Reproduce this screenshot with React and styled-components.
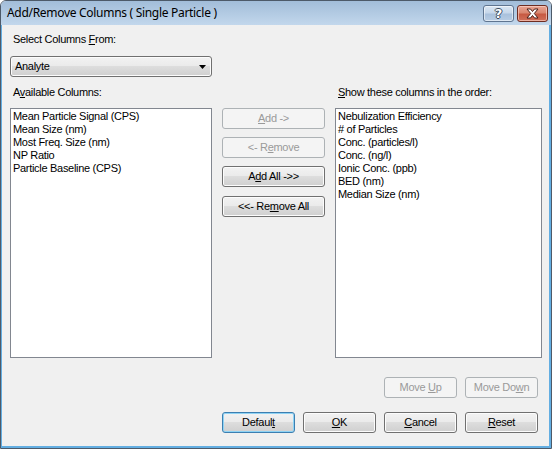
import React from "react";
import styled, { createGlobalStyle, css } from "styled-components";

const Global = createGlobalStyle`
  html, body { margin: 0; padding: 0; background: #ffffff; }
  body { font-family: "Liberation Sans", Arial, sans-serif; }
  * { box-sizing: border-box; }
`;

const Window = styled.div`
  width: 552px;
  height: 449px;
  border: 1px solid #4d5a69;
  border-radius: 6px 6px 0 0;
  display: flex;
  flex-direction: column;
  overflow: hidden;
  background: #f0f0f0;
`;

const TitleBar = styled.div`
  height: 24px;
  flex: none;
  display: flex;
  align-items: flex-start;
  padding: 0 3px 0 6px;
  background: linear-gradient(#a2bdd9, #c2d7ec);
`;

const TitleText = styled.div`
  flex: 1;
  font-family: "Noto Sans", "Open Sans", sans-serif;
  font-size: 12px;
  letter-spacing: -0.3px;
  line-height: 24px;
  color: #000;
  white-space: nowrap;
`;

const CaptionButton = styled.div`
  width: 31px;
  height: 17px;
  margin-top: 4px;
  margin-left: 3px;
  border-radius: 3px;
  display: flex;
  align-items: center;
  justify-content: center;
  ${(p) =>
    p.$close
      ? css`
          border: 1px solid #6e2d22;
          background: linear-gradient(#e8a493 0%, #d98770 45%, #c75a42 55%, #d0705a 100%);
          box-shadow: inset 0 0 0 1px rgba(255, 220, 210, 0.6);
        `
      : css`
          border: 1px solid #5f7590;
          background: linear-gradient(#dbe7f3 0%, #c6d7ea 45%, #a9c1dc 55%, #b8cde4 100%);
          box-shadow: inset 0 0 0 1px rgba(255, 255, 255, 0.55);
        `}
`;

const HelpGlyph = styled.span`
  font-family: "DejaVu Sans", sans-serif;
  font-weight: bold;
  font-size: 13px;
  line-height: 1;
  color: #ffffff;
  text-shadow: -1px 0 #3b4b5e, 1px 0 #3b4b5e, 0 -1px #3b4b5e, 0 1px #3b4b5e;
`;

const Frame = styled.div`
  flex: 1;
  display: flex;
  flex-direction: column;
  border-style: solid;
  border-color: #63aee2;
  border-width: 0 2px 2px 1px;
  padding: 8px 0 0 8px;
  font-size: 11px;
  letter-spacing: -0.3px;
  color: #000;
`;

const Label = styled.div`
  height: 13px;
  line-height: 13px;
  padding-left: 3px;
  white-space: nowrap;
`;

const Combo = styled.div`
  width: 202px;
  height: 21px;
  margin-top: 10px;
  border: 1px solid #707070;
  border-radius: 3px;
  background: linear-gradient(#f2f2f2 0%, #ebebeb 45%, #dddddd 50%, #cfcfcf 100%);
  box-shadow: inset 0 0 0 1px #fcfcfc;
  display: flex;
  align-items: center;
  padding: 0 5px 0 4px;
`;

const ComboText = styled.span`
  flex: 1;
  line-height: 13px;
`;

const ColumnsGrid = styled.div`
  margin-top: 9px;
  display: grid;
  grid-template-columns: 202px 103px 207px;
  grid-template-rows: 13px 250px;
  column-gap: 10px;
  row-gap: 9px;
`;

const ListBox = styled.div`
  border: 1px solid #828790;
  background: #ffffff;
  padding: 1px 2px;
`;

const ListItem = styled.div`
  height: 13px;
  line-height: 13px;
  white-space: nowrap;
`;

const ButtonStack = styled.div`
  display: flex;
  flex-direction: column;
  gap: 8px;
`;

const ButtonBox = styled.div`
  width: ${(p) => p.$w || 73}px;
  height: 21px;
  flex: none;
  margin-top: ${(p) => p.$mt || 0}px;
  display: flex;
  align-items: center;
  justify-content: center;
  line-height: 13px;
  color: #000;
  border: 1px solid #707070;
  border-radius: 3px;
  background: linear-gradient(#f2f2f2 0%, #ebebeb 45%, #dddddd 50%, #cfcfcf 100%);
  box-shadow: inset 0 0 0 1px #fcfcfc;
  white-space: nowrap;
  ${(p) =>
    p.$default &&
    css`
      border-color: #3c7fb1;
      box-shadow: inset 0 0 0 1px #8fd3f4;
    `}
  ${(p) =>
    p.$disabled &&
    css`
      border-color: #adb2b5;
      background: #f4f4f4;
      color: #9a9a9a;
      box-shadow: none;
    `}
  u {
    text-decoration: underline;
    text-underline-offset: 1px;
  }
`;

const ButtonLabel = styled.span`
  white-space: pre;
`;

const Button = ({ children, ...rest }) => (
  <ButtonBox role="button" {...rest}>
    <ButtonLabel>{children}</ButtonLabel>
  </ButtonBox>
);

const ButtonRow = styled.div`
  display: flex;
  justify-content: flex-end;
  gap: 8px;
  margin-top: ${(p) => p.$mt}px;
  margin-right: 11px;
`;

const available = [
  "Mean Particle Signal (CPS)",
  "Mean Size (nm)",
  "Most Freq. Size (nm)",
  "NP Ratio",
  "Particle Baseline (CPS)",
];

const shown = [
  "Nebulization Efficiency",
  "# of Particles",
  "Conc. (particles/l)",
  "Conc. (ng/l)",
  "Ionic Conc. (ppb)",
  "BED (nm)",
  "Median Size (nm)",
];

export default function App() {
  return (
    <>
      <Global />
      <Window>
        <TitleBar>
          <TitleText>Add/Remove Columns ( Single Particle )</TitleText>
          <CaptionButton>
            <HelpGlyph>?</HelpGlyph>
          </CaptionButton>
          <CaptionButton $close>
            <svg width="15" height="11" viewBox="0 0 15 11">
              <path
                d="M2 1 L5.5 1 L7.5 3.5 L9.5 1 L13 1 L9.3 5.5 L13 10 L9.5 10 L7.5 7.5 L5.5 10 L2 10 L5.7 5.5 Z"
                fill="#ffffff"
                stroke="#4a1f18"
                strokeWidth="1"
                strokeLinejoin="round"
              />
            </svg>
          </CaptionButton>
        </TitleBar>
        <Frame>
          <Label>
            Select Columns <u>F</u>rom:
          </Label>
          <Combo>
            <ComboText>Analyte</ComboText>
            <svg width="7" height="4" viewBox="0 0 7 4">
              <path d="M0 0 H7 L3.5 4 Z" fill="#000" />
            </svg>
          </Combo>
          <ColumnsGrid>
            <Label>
              A<u>v</u>ailable Columns:
            </Label>
            <div />
            <Label>
              <u>S</u>how these columns in the order:
            </Label>
            <ListBox>
              {available.map((t) => (
                <ListItem key={t}>{t}</ListItem>
              ))}
            </ListBox>
            <ButtonStack>
              <Button $w={103} $disabled>
                <u>A</u>dd -&gt;
              </Button>
              <Button $w={103} $disabled>
                &lt;- R<u>e</u>move
              </Button>
              <Button $w={103}>
                A<u>d</u>d All -&gt;&gt;
              </Button>
              <Button $w={103} $mt={1}>
                &lt;&lt;- Re<u>m</u>ove All
              </Button>
            </ButtonStack>
            <ListBox>
              {shown.map((t) => (
                <ListItem key={t}>{t}</ListItem>
              ))}
            </ListBox>
          </ColumnsGrid>
          <ButtonRow $mt={19}>
            <Button $disabled>
              Move <u>U</u>p
            </Button>
            <Button $disabled>
              Move Do<u>w</u>n
            </Button>
          </ButtonRow>
          <ButtonRow $mt={14}>
            <Button $default>
              Defaul<u>t</u>
            </Button>
            <Button>
              <u>O</u>K
            </Button>
            <Button>
              <u>C</u>ancel
            </Button>
            <Button>
              <u>R</u>eset
            </Button>
          </ButtonRow>
        </Frame>
      </Window>
    </>
  );
}
